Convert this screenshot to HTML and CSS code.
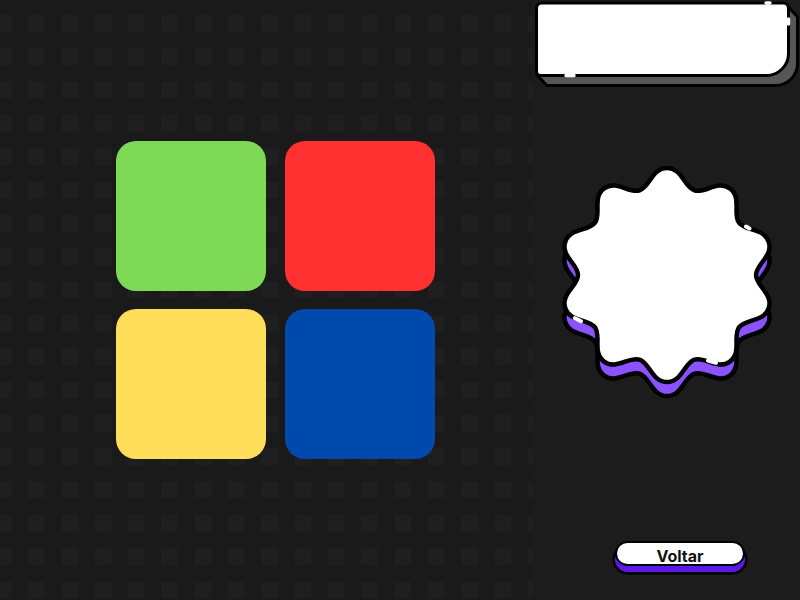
FILE: index.html
```html
<!DOCTYPE html>
<html lang="pt">
<head>
<meta charset="utf-8">
<title>Cores</title>
<link rel="stylesheet" href="styles.css">
</head>
<body>
<main class="stage">
  <section class="board">
    <div class="tiles">
      <div class="tile tile-green"></div>
      <div class="tile tile-red"></div>
      <div class="tile tile-yellow"></div>
      <div class="tile tile-blue"></div>
    </div>
  </section>
  <aside class="side">
    <svg class="panel" viewBox="0 0 267 90" width="267" height="90">
      <path class="panel-depth" d="M255.5 7 L264.5 17 L264.5 63.5 A22 22 0 0 1 242.5 85.5 L14 85.5 L4 75 Z"/>
      <path class="panel-face" d="M8.5 3 L250.5 3 A5 5 0 0 1 255.5 8 L255.5 53.5 A22 22 0 0 1 233.5 75.5 L7.5 75.5 A4 4 0 0 1 3.5 71.5 L3.5 8 A5 5 0 0 1 8.5 3 Z"/>
      <path class="shine" d="M233 3 L237 3 M255.5 19 L255.5 24 M33 75.5 L41 75.5"/>
    </svg>
    <svg class="badge" viewBox="0 0 230 240" width="230" height="240">
      <defs>
        <path id="wave" d="M115 6 C130 6 132.04 24.95 142.5 28.35 C152.96 31.75 165.75 17.62 177.89 26.44 C190.03 35.26 180.53 51.79 187 60.69 C193.47 69.59 212.13 65.67 216.77 79.94 C221.41 94.21 204 102 204 113 C204 124 221.41 131.79 216.77 146.06 C212.13 160.33 193.47 156.41 187 165.31 C180.53 174.21 190.03 190.74 177.89 199.56 C165.75 208.38 152.96 194.25 142.5 197.65 C132.04 201.05 130 220 115 220 C100 220 97.96 201.05 87.5 197.65 C77.04 194.25 64.25 208.38 52.11 199.56 C39.97 190.74 49.47 174.21 43 165.31 C36.53 156.41 17.87 160.33 13.23 146.06 C8.59 131.79 26 124 26 113 C26 102 8.59 94.21 13.23 79.94 C17.87 65.67 36.53 69.59 43 60.69 C49.47 51.79 39.97 35.26 52.11 26.44 C64.25 17.62 77.04 31.75 87.5 28.35 C97.96 24.95 100 6 115 6 Z"/>
      </defs>
      <use href="#wave" class="badge-depth" transform="translate(0 14)"/>
      <use href="#wave" class="badge-face"/>
      <path class="shine badge-shine" d="M194 64.5 L197.5 66.5 M29 159.2 L23 156.2 M164 200.8 L156 198.6"/>
    </svg>
    <button class="back" type="button">Voltar</button>
  </aside>
</main>
</body>
</html>
```
FILE: styles.css
```css
html, body {
  margin: 0;
  padding: 0;
}

body {
  background: #1c1c1c;
  font-family: Inter, "Liberation Sans", sans-serif;
}

.stage {
  display: flex;
  width: 800px;
  height: 600px;
  overflow: hidden;
}

.board {
  flex: none;
  width: 533px;
  box-sizing: border-box;
  padding-left: 116px;
  display: flex;
  align-items: center;
  background: #1a1a1a conic-gradient(at 17px 17px, #1a1a1a 270deg, #1f1f1f 0) 28px 15px / 33.333px 33.333px;
}

.tiles {
  display: grid;
  grid-template-columns: 150px 150px;
  grid-auto-rows: 150px;
  column-gap: 19px;
  row-gap: 18px;
}

.tile {
  border-radius: 20px;
}

.tile-green { background: #7ed957; }
.tile-red { background: #ff3131; }
.tile-yellow { background: #ffde59; }
.tile-blue { background: #004aad; }

.side {
  flex: 1;
  display: flex;
  flex-direction: column;
  align-items: flex-start;
}

.panel {
  display: block;
}

.panel-depth {
  fill: #565656;
  stroke: #000;
  stroke-width: 3;
  stroke-linejoin: round;
}

.panel-face {
  fill: #fff;
  stroke: #000;
  stroke-width: 3;
}

.shine {
  fill: none;
  stroke: #fff;
  stroke-width: 3.4;
  stroke-linecap: round;
}

.badge {
  display: block;
  margin: 72px 0 0 19px;
}

.badge-depth {
  fill: #8c52ff;
  stroke: #000;
  stroke-width: 4.5;
  stroke-linejoin: round;
}

.badge-face {
  fill: #fff;
  stroke: #000;
  stroke-width: 4.5;
  stroke-linejoin: round;
}

.badge-shine {
  stroke-width: 4;
}

.back {
  margin: 139px 0 0 82px;
  width: 130px;
  height: 25px;
  box-sizing: border-box;
  padding: 5px 0 0;
  display: flex;
  align-items: center;
  justify-content: center;
  border: 2.5px solid #000;
  border-radius: 13px;
  background: #fff;
  box-shadow: 0 6px 0 0 #5e17eb, 0 6px 0 2.5px #000;
  color: #111;
  font: 700 16px/1 Inter, "Liberation Sans", sans-serif;
  cursor: pointer;
}
```
